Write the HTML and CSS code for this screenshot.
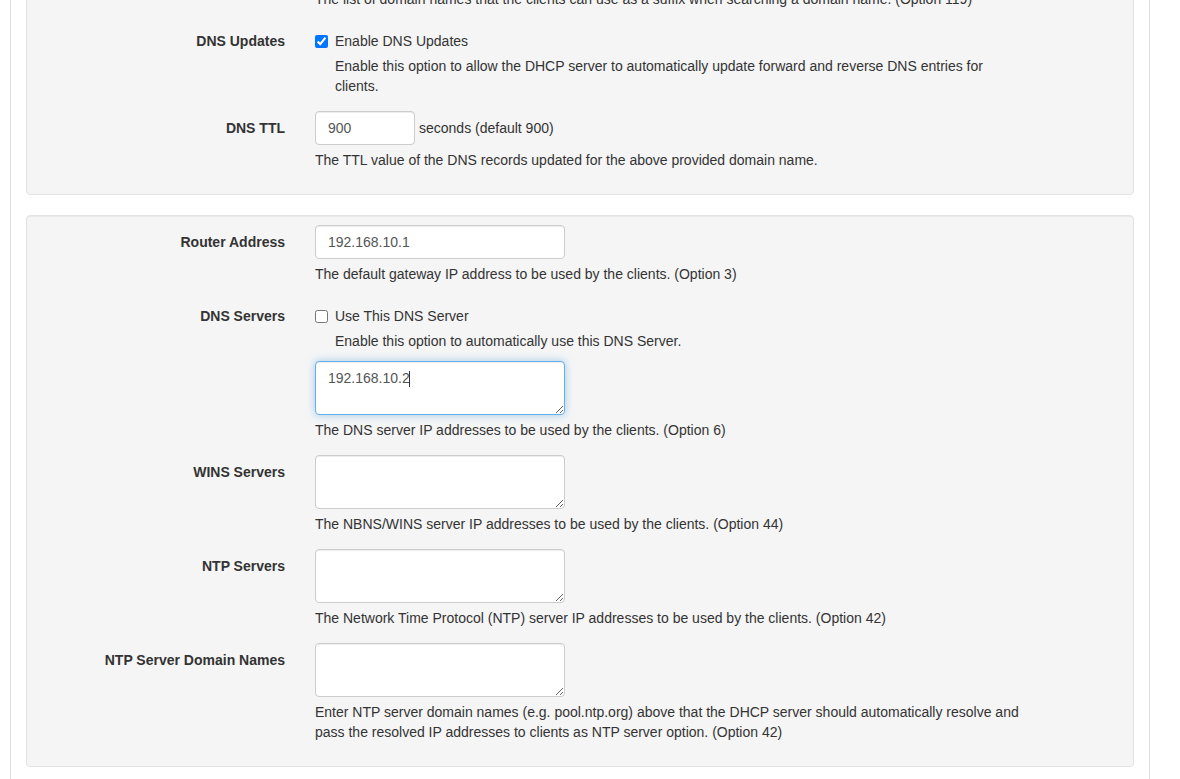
FILE: index.html
```html
<!DOCTYPE html>
<html lang="en">
<head>
<meta charset="utf-8">
<title>DHCP Server</title>
<link rel="stylesheet" href="styles.css">
</head>
<body>
<div class="page">
  <div class="panel">
    <div class="row">
      <div class="label">Domain Search List</div>
      <div class="field">
        <input class="text wide" type="text" value="">
        <div class="help">The list of domain names that the clients can use as a suffix when searching a domain name. (Option 119)</div>
      </div>
    </div>
    <div class="row">
      <div class="label">DNS Updates</div>
      <div class="field">
        <label class="check"><input type="checkbox" checked> Enable DNS Updates</label>
        <div class="help indent">Enable this option to allow the DHCP server to automatically update forward and reverse DNS entries for clients.</div>
      </div>
    </div>
    <div class="row">
      <div class="label">DNS TTL</div>
      <div class="field">
        <div class="inline">
          <input class="text small" type="text" value="900">
          <span class="unit">seconds (default 900)</span>
        </div>
        <div class="help">The TTL value of the DNS records updated for the above provided domain name.</div>
      </div>
    </div>
  </div>

  <div class="panel">
    <div class="row">
      <div class="label">Router Address</div>
      <div class="field">
        <input class="text wide" type="text" value="192.168.10.1">
        <div class="help">The default gateway IP address to be used by the clients. (Option 3)</div>
      </div>
    </div>
    <div class="row">
      <div class="label">DNS Servers</div>
      <div class="field">
        <label class="check"><input type="checkbox"> Use This DNS Server</label>
        <div class="help indent gapbelow">Enable this option to automatically use this DNS Server.</div>
        <div class="areawrap">
          <textarea class="area focus" rows="2">192.168.10.2</textarea>
          <span class="caret"></span>
        </div>
        <div class="help">The DNS server IP addresses to be used by the clients. (Option 6)</div>
      </div>
    </div>
    <div class="row">
      <div class="label">WINS Servers</div>
      <div class="field">
        <textarea class="area" rows="2"></textarea>
        <div class="help">The NBNS/WINS server IP addresses to be used by the clients. (Option 44)</div>
      </div>
    </div>
    <div class="row">
      <div class="label">NTP Servers</div>
      <div class="field">
        <textarea class="area" rows="2"></textarea>
        <div class="help">The Network Time Protocol (NTP) server IP addresses to be used by the clients. (Option 42)</div>
      </div>
    </div>
    <div class="row">
      <div class="label">NTP Server Domain Names</div>
      <div class="field">
        <textarea class="area" rows="2"></textarea>
        <div class="help">Enter NTP server domain names (e.g. pool.ntp.org) above that the DHCP server should automatically resolve and pass the resolved IP addresses to clients as NTP server option. (Option 42)</div>
      </div>
    </div>
  </div>
</div>
</body>
</html>
```

FILE: styles.css
```css
html, body {
  margin: 0;
  padding: 0;
  background: #fff;
}

body {
  font-family: "Liberation Sans", Arial, Helvetica, sans-serif;
  font-size: 14px;
  line-height: 20px;
  color: #333;
  height: 779px;
  overflow: hidden;
}

.page {
  box-sizing: border-box;
  width: 1140px;
  height: 839px;
  margin: -60px 0 0 10px;
  padding: 0 15px;
  border-left: 1px solid #dcdcdc;
  border-right: 1px solid #dcdcdc;
}

.panel {
  background: #f5f5f5;
  border: 1px solid #e3e3e3;
  border-radius: 4px;
  box-shadow: inset 0 1px 1px rgba(0, 0, 0, 0.05);
  padding: 9px 0;
  margin-bottom: 20px;
}

.row {
  display: grid;
  grid-template-columns: 273px 740px;
  margin-bottom: 15px;
}

.label {
  text-align: right;
  font-weight: bold;
  padding: 7px 15px 0 0;
}

.field {
  padding: 0 15px;
}

.check {
  display: flex;
  align-items: center;
  padding-top: 7px;
  height: 20px;
  color: #333;
}

.check input {
  width: 13px;
  height: 13px;
  margin: 0 7px 0 0;
}

.help {
  margin-top: 5px;
  color: #333;
}

.indent {
  padding-left: 20px;
}

.gapbelow {
  margin-bottom: 10px;
}

.text,
.area {
  box-sizing: border-box;
  display: block;
  font-family: "Liberation Sans", Arial, Helvetica, sans-serif;
  font-size: 14px;
  line-height: 20px;
  color: #555;
  background: #fff;
  border: 1px solid #ccc;
  border-radius: 4px;
  box-shadow: inset 0 1px 1px rgba(0, 0, 0, 0.075);
  padding: 6px 12px;
  margin: 0;
  outline: none;
}

.text {
  height: 34px;
}

.wide {
  width: 250px;
}

.small {
  width: 100px;
}

.area {
  width: 250px;
  height: 54px;
  resize: both;
}

.focus {
  border-color: #66afe9;
  box-shadow: inset 0 1px 1px rgba(0, 0, 0, 0.075), 0 0 8px rgba(102, 175, 233, 0.6);
}

.areawrap {
  position: relative;
  width: 250px;
}

.caret {
  position: absolute;
  left: 94px;
  top: 10px;
  width: 1px;
  height: 16px;
  background: #333;
}

.inline {
  display: flex;
  align-items: center;
}

.unit {
  margin-left: 4px;
}
```
